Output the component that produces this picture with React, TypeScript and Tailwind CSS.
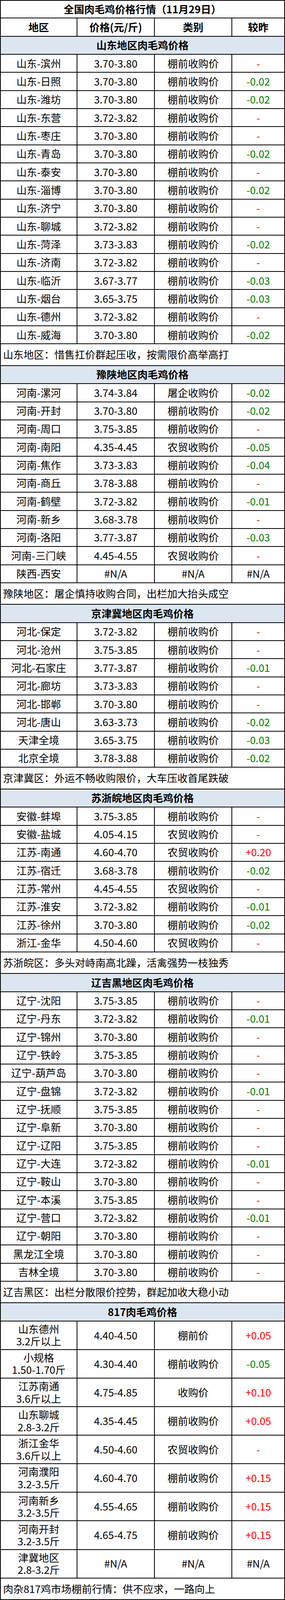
type Row = [string, string, string, string];

const GROUPS: { title: string; rows: Row[]; note: string }[] = [
  {
    title: "山东地区肉毛鸡价格",
    rows: [
      ["山东-滨州", "3.70-3.80", "棚前收购价", "-"],
      ["山东-日照", "3.70-3.80", "棚前收购价", "-0.02"],
      ["山东-潍坊", "3.70-3.80", "棚前收购价", "-0.02"],
      ["山东-东营", "3.72-3.82", "棚前收购价", "-"],
      ["山东-枣庄", "3.70-3.80", "棚前收购价", "-"],
      ["山东-青岛", "3.70-3.80", "棚前收购价", "-0.02"],
      ["山东-泰安", "3.70-3.80", "棚前收购价", "-"],
      ["山东-淄博", "3.70-3.80", "棚前收购价", "-0.02"],
      ["山东-济宁", "3.70-3.80", "棚前收购价", "-"],
      ["山东-聊城", "3.72-3.82", "棚前收购价", "-"],
      ["山东-菏泽", "3.73-3.83", "棚前收购价", "-0.02"],
      ["山东-济南", "3.72-3.82", "棚前收购价", "-"],
      ["山东-临沂", "3.67-3.77", "棚前收购价", "-0.03"],
      ["山东-烟台", "3.65-3.75", "棚前收购价", "-0.03"],
      ["山东-德州", "3.72-3.82", "棚前收购价", "-"],
      ["山东-威海", "3.70-3.80", "棚前收购价", "-0.02"],
    ],
    note: "山东地区：惜售扛价群起压收，按需限价高举高打",
  },
  {
    title: "豫陕地区肉毛鸡价格",
    rows: [
      ["河南-漯河", "3.74-3.84", "屠企收购价", "-0.02"],
      ["河南-开封", "3.70-3.80", "棚前收购价", "-0.02"],
      ["河南-周口", "3.75-3.85", "棚前收购价", "-"],
      ["河南-南阳", "4.35-4.45", "农贸收购价", "-0.05"],
      ["河南-焦作", "3.73-3.83", "棚前收购价", "-0.04"],
      ["河南-商丘", "3.78-3.88", "棚前收购价", "-"],
      ["河南-鹤壁", "3.72-3.82", "棚前收购价", "-0.01"],
      ["河南-新乡", "3.68-3.78", "棚前收购价", "-"],
      ["河南-洛阳", "3.77-3.87", "棚前收购价", "-0.03"],
      ["河南-三门峡", "4.45-4.55", "农贸收购价", "-"],
      ["陕西-西安", "#N/A", "#N/A", "#N/A"],
    ],
    note: "豫陕地区：屠企慎持收购合同，出栏加大抬头成空",
  },
  {
    title: "京津冀地区肉毛鸡价格",
    rows: [
      ["河北-保定", "3.72-3.82", "棚前收购价", "-"],
      ["河北-沧州", "3.75-3.85", "棚前收购价", "-"],
      ["河北-石家庄", "3.77-3.87", "棚前收购价", "-0.01"],
      ["河北-廊坊", "3.73-3.83", "棚前收购价", "-"],
      ["河北-邯郸", "3.70-3.80", "棚前收购价", "-"],
      ["河北-唐山", "3.63-3.73", "棚前收购价", "-0.02"],
      ["天津全境", "3.65-3.75", "棚前收购价", "-0.03"],
      ["北京全境", "3.78-3.88", "棚前收购价", "-0.02"],
    ],
    note: "京津冀区：外运不畅收购限价，大车压收首尾跌破",
  },
  {
    title: "苏浙皖地区肉毛鸡价格",
    rows: [
      ["安徽-蚌埠", "3.75-3.85", "棚前收购价", "-"],
      ["安徽-盐城", "4.05-4.15", "农贸收购价", "-"],
      ["江苏-南通", "4.60-4.70", "农贸收购价", "+0.20"],
      ["江苏-宿迁", "3.68-3.78", "棚前收购价", "-0.02"],
      ["江苏-常州", "4.45-4.55", "农贸收购价", "-"],
      ["江苏-淮安", "3.72-3.82", "棚前收购价", "-0.01"],
      ["江苏-徐州", "3.70-3.80", "棚前收购价", "-0.02"],
      ["浙江-金华", "4.50-4.60", "农贸收购价", "-"],
    ],
    note: "苏浙皖区：多头对峙南高北躁，活禽强势一枝独秀",
  },
  {
    title: "辽吉黑地区肉毛鸡价格",
    rows: [
      ["辽宁-沈阳", "3.75-3.85", "棚前收购价", "-"],
      ["辽宁-丹东", "3.72-3.82", "棚前收购价", "-0.01"],
      ["辽宁-锦州", "3.70-3.80", "棚前收购价", "-"],
      ["辽宁-铁岭", "3.75-3.85", "棚前收购价", "-"],
      ["辽宁-葫芦岛", "3.70-3.80", "棚前收购价", "-"],
      ["辽宁-盘锦", "3.72-3.82", "棚前收购价", "-0.01"],
      ["辽宁-抚顺", "3.75-3.85", "棚前收购价", "-"],
      ["辽宁-阜新", "3.70-3.80", "棚前收购价", "-"],
      ["辽宁-辽阳", "3.75-3.85", "棚前收购价", "-"],
      ["辽宁-大连", "3.72-3.82", "棚前收购价", "-0.01"],
      ["辽宁-鞍山", "3.70-3.80", "棚前收购价", "-"],
      ["辽宁-本溪", "3.75-3.85", "棚前收购价", "-"],
      ["辽宁-营口", "3.72-3.82", "棚前收购价", "-0.01"],
      ["辽宁-朝阳", "3.70-3.80", "棚前收购价", "-"],
      ["黑龙江全境", "3.70-3.80", "棚前收购价", "-"],
      ["吉林全境", "3.70-3.80", "棚前收购价", "-"],
    ],
    note: "辽吉黑区：出栏分散限价控势，群起加收大稳小动",
  },
];

// 817 rows: the first cell holds two lines
const ROWS_817: [string, string, string, string, string][] = [
  ["山东德州", "3.2斤以上", "4.40-4.50", "棚前价", "+0.05"],
  ["小规格", "1.50-1.70斤", "4.30-4.40", "棚前收购价", "-0.05"],
  ["江苏南通", "3.6斤以上", "4.75-4.85", "收购价", "+0.10"],
  ["山东聊城", "2.8-3.2斤", "4.35-4.45", "棚前收购价", "+0.05"],
  ["浙江金华", "3.6斤以上", "4.50-4.60", "农贸收购价", "-"],
  ["河南濮阳", "3.2-3.5斤", "4.60-4.70", "棚前收购价", "+0.15"],
  ["河南新乡", "3.2-3.5斤", "4.55-4.65", "棚前收购价", "+0.15"],
  ["河南开封", "3.2-3.5斤", "4.65-4.75", "棚前收购价", "+0.15"],
  ["津冀地区", "2.8-3.2斤", "#N/A", "#N/A", "#N/A"],
];

// rows share the screen height by weight (53 / 64 / 85 of 4701)
const rowCls = "grid grid-cols-[196fr_198fr_198fr_133fr] border-b-2 border-black basis-0";
const cellCls = "flex min-w-0 flex-col items-center justify-center whitespace-nowrap border-r-2 border-black";
const lastCls = "flex min-w-0 items-center justify-center whitespace-nowrap";

function changeColor(v: string) {
  if (v === "#N/A") return "text-black";
  if (v.startsWith("+") || v === "-") return "text-[#ff0000]";
  return "text-[#008000]";
}

function SectionHeader({ title }: { title: string }) {
  return (
    <div className="flex grow-[53] basis-0 items-center justify-center border-b-2 border-black bg-[#dce6f1] font-bold">
      {title}
    </div>
  );
}

function NoteRow({ text }: { text: string }) {
  return (
    <div className="flex grow-[64] basis-0 items-center border-b-2 border-black pl-[0.8vw]">{text}</div>
  );
}

export default function App() {
  return (
    <div
      className="flex h-screen w-screen flex-col overflow-hidden border-x-2 border-t-2 border-black bg-white text-[3.6vw] leading-[0.766vh] text-black"
      style={{ fontFamily: '"Noto Sans CJK SC", "Noto Sans", sans-serif' }}
    >
      <div className="flex grow-[52] basis-0 items-center justify-center border-b-2 border-black font-bold">
        全国肉毛鸡价格行情（11月29日）
      </div>
      <div className={`${rowCls} grow-[53] font-bold`}>
        <div className={cellCls}>地区</div>
        <div className={cellCls}>价格(元/斤)</div>
        <div className={cellCls}>类别</div>
        <div className={lastCls}>较昨</div>
      </div>

      {GROUPS.map((g) => (
        <div key={g.title} className="contents">
          <SectionHeader title={g.title} />
          {g.rows.map((r) => (
            <div key={r[0]} className={`${rowCls} grow-[53]`}>
              <div className={cellCls}>{r[0]}</div>
              <div className={cellCls}>{r[1]}</div>
              <div className={cellCls}>{r[2]}</div>
              <div className={`${lastCls} ${changeColor(r[3])}`}>{r[3]}</div>
            </div>
          ))}
          <NoteRow text={g.note} />
        </div>
      ))}

      <SectionHeader title="817肉毛鸡价格" />
      {ROWS_817.map((r) => (
        <div key={r[0]} className={`${rowCls} grow-[85]`}>
          <div className={cellCls}>
            <span>{r[0]}</span>
            <span>{r[1]}</span>
          </div>
          <div className={cellCls}>{r[2]}</div>
          <div className={cellCls}>{r[3]}</div>
          <div className={`${lastCls} ${changeColor(r[4])}`}>{r[4]}</div>
        </div>
      ))}
      <NoteRow text="肉杂817鸡市场棚前行情：供不应求，一路向上" />
    </div>
  );
}
